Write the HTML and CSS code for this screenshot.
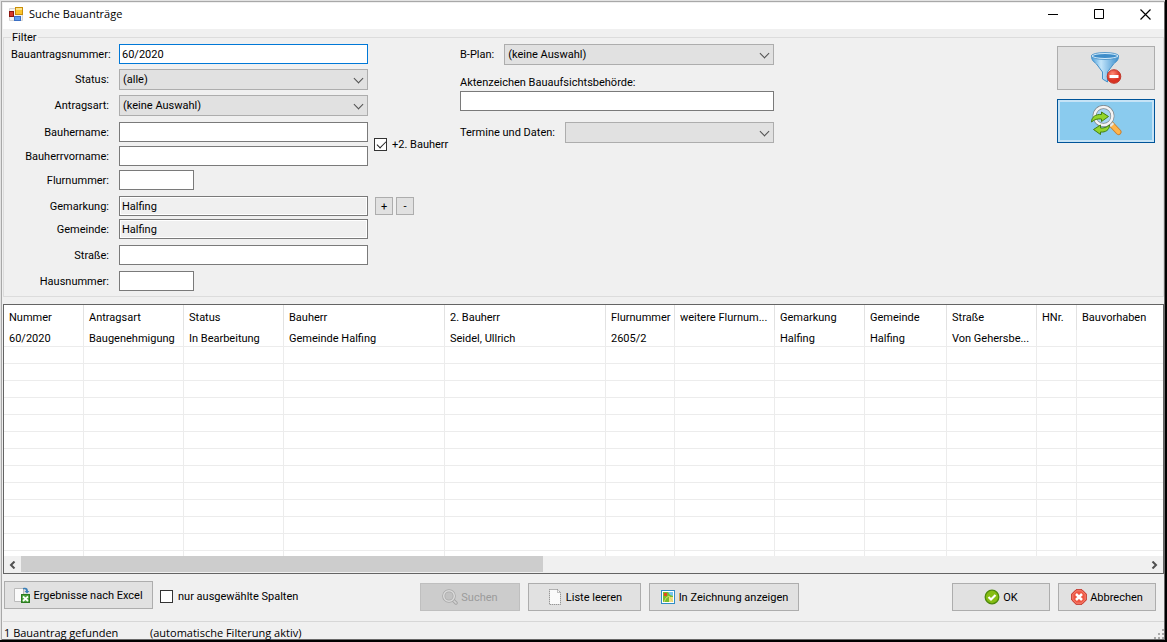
FILE: index.html
```html
<!DOCTYPE html>
<html lang="de">
<head>
<meta charset="utf-8">
<title>Suche Bauanträge</title>
<link rel="stylesheet" href="styles.css">
</head>
<body>
<div class="window">
  <header class="titlebar">
    <svg class="app-icon" width="14" height="14" viewBox="0 0 14 14" aria-hidden="true">
      <path d="M.5 1.500h13v12H.5z" fill="#f4f4f4" stroke="#d5d5d5"/>
      <rect x=".5" y="4.500" width="4" height="5" fill="#d6392b" stroke="#8d1610"/>
      <rect x="6.500" y=".5" width="7" height="7" fill="#fbc42c" stroke="#c98e0a"/>
      <path d="M7 1h6v2H7z" fill="#fde48b"/>
      <rect x="5.500" y="9.500" width="6" height="4" fill="#5f9df0" stroke="#3b6fc4"/>
    </svg>
    <h1 class="title">Suche Bauanträge</h1>
    <div class="window-controls">
      <button type="button" class="window-button" aria-label="Minimieren"><svg width="11" height="11"><path d="M0 5.500h10" stroke="#000"/></svg></button>
      <button type="button" class="window-button" aria-label="Maximieren"><svg width="11" height="11"><path d="M.5.500h9v9h-9z" fill="none" stroke="#000"/></svg></button>
      <button type="button" class="window-button" aria-label="Schließen"><svg width="11" height="11"><path d="M.5.500l10 10M10.500.500l-10 10" stroke="#000" stroke-width="1.200"/></svg></button>
    </div>
  </header>

  <fieldset class="filter">
    <legend>Filter</legend>
    <div class="filter-body">
      <div class="fields">
        <div class="field-group">
          <label for="nr">Bauantragsnummer:</label><input id="nr" class="box focused" type="text" value="60/2020" autofocus>
          <label for="status">Status:</label><div class="drop"><select id="status"><option>(alle)</option></select></div>
          <label for="art">Antragsart:</label><div class="drop"><select id="art"><option>(keine Auswahl)</option></select></div>
        </div>
        <div class="with-extra">
          <div class="field-group tight">
            <label for="name">Bauhername:</label><input id="name" class="box" type="text">
            <label for="vorname">Bauherrvorname:</label><input id="vorname" class="box" type="text">
            <label for="flur">Flurnummer:</label><input id="flur" class="box short" type="text">
          </div>
          <label class="check second-owner"><input type="checkbox" checked>+2. Bauherr</label>
        </div>
        <div class="with-extra">
          <div class="field-group places">
            <label for="gemarkung">Gemarkung:</label><input id="gemarkung" class="box" type="text" value="Halfing" readonly>
            <label for="gemeinde">Gemeinde:</label><input id="gemeinde" class="box" type="text" value="Halfing" readonly>
          </div>
          <div class="steppers"><button type="button" class="button">+</button><button type="button" class="button">-</button></div>
        </div>
        <div class="field-group loose">
          <label for="strasse">Straße:</label><input id="strasse" class="box" type="text">
          <label for="hausnr">Hausnummer:</label><input id="hausnr" class="box short" type="text">
        </div>
      </div>

      <div class="details">
        <div class="detail-row"><label for="bplan">B-Plan:</label><div class="drop"><select id="bplan"><option>(keine Auswahl)</option></select></div></div>
        <div class="detail-stack"><label for="akten">Aktenzeichen Bauaufsichtsbehörde:</label><input id="akten" class="box" type="text"></div>
        <div class="detail-row"><label for="termine">Termine und Daten:</label><div class="drop"><select id="termine"><option></option></select></div></div>
      </div>

      <div class="actions">
        <button type="button" class="button large" aria-label="Filter entfernen">
          <svg width="32" height="32" viewBox="0 0 32 32">
            <defs><linearGradient id="funnel" x1="0" x2="1"><stop offset="0" stop-color="#4d9fdb"/><stop offset=".35" stop-color="#c3e5fa"/><stop offset="1" stop-color="#3c8fce"/></linearGradient>
            <radialGradient id="red" cx=".4" cy=".3"><stop offset="0" stop-color="#ff8b75"/><stop offset="1" stop-color="#d93222"/></radialGradient></defs>
            <path d="M1.500 4c0 5 3 6 5 8l6 8v7l5 3V20l6-8c2-2 5-3 5-8z" fill="url(#funnel)" stroke="#4590c8"/>
            <ellipse cx="15" cy="4" rx="13" ry="2.700" fill="#3f8dc9" stroke="#d3ebfa" stroke-width="1.500"/>
            <ellipse cx="15" cy="4" rx="13.800" ry="3.500" fill="none" stroke="#3c88c2" stroke-width=".8"/>
            <circle cx="24" cy="24.500" r="6.800" fill="url(#red)" stroke="#c23a2d"/>
            <rect x="19.500" y="23" width="9" height="3" fill="#fff"/>
          </svg>
        </button>
        <button type="button" class="button large active" aria-label="Suche aktualisieren">
          <svg width="32" height="32" viewBox="0 0 32 32">
            <path d="M21 19l7.500 8" stroke="#c98032" stroke-width="6" stroke-linecap="round"/>
            <path d="M22 20l6.500 7" stroke="#ffb54c" stroke-width="4.200" stroke-linecap="round"/>
            <path d="M19 17l3.500 3.500" stroke="#e8e8e8" stroke-width="4.500"/>
            <circle cx="13.500" cy="11" r="9" fill="#a7d5f3" stroke="#7d8488" stroke-width="3.800"/>
            <circle cx="13.500" cy="11" r="9" fill="none" stroke="#f4f4f4" stroke-width="2.600"/>
            <path d="M1.500 17c0-5 4-8 10-7.500V7l7 4.500-7 5V14c-4-.5-7 .5-10 3z" fill="#93d52b" stroke="#437f12"/>
            <path d="M19.500 20c0 5-4 7.500-9 7v2.500l-7-5 7-4.500v3c3 .3 6-.5 9-3z" fill="#93d52b" stroke="#437f12"/>
          </svg>
        </button>
      </div>
    </div>
  </fieldset>

  <section class="results">
    <div class="rows">
      <table>
        <colgroup><col class="w80"><col class="w100"><col class="w100"><col class="w161"><col class="w161"><col class="w69"><col class="w100"><col class="w90"><col class="w82"><col class="w90"><col class="w40"><col></colgroup>
        <thead><tr><th>Nummer</th><th>Antragsart</th><th>Status</th><th>Bauherr</th><th>2. Bauherr</th><th>Flurnummer</th><th>weitere Flurnum...</th><th>Gemarkung</th><th>Gemeinde</th><th>Straße</th><th>HNr.</th><th>Bauvorhaben</th></tr></thead>
        <tbody>
          <tr><td>60/2020</td><td>Baugenehmigung</td><td>In Bearbeitung</td><td>Gemeinde Halfing</td><td>Seidel, Ullrich</td><td>2605/2</td><td></td><td>Halfing</td><td>Halfing</td><td>Von Gehersbe...</td><td></td><td></td></tr>
          <tr><td></td><td></td><td></td><td></td><td></td><td></td><td></td><td></td><td></td><td></td><td></td><td></td></tr>
          <tr><td></td><td></td><td></td><td></td><td></td><td></td><td></td><td></td><td></td><td></td><td></td><td></td></tr>
          <tr><td></td><td></td><td></td><td></td><td></td><td></td><td></td><td></td><td></td><td></td><td></td><td></td></tr>
          <tr><td></td><td></td><td></td><td></td><td></td><td></td><td></td><td></td><td></td><td></td><td></td><td></td></tr>
          <tr><td></td><td></td><td></td><td></td><td></td><td></td><td></td><td></td><td></td><td></td><td></td><td></td></tr>
          <tr><td></td><td></td><td></td><td></td><td></td><td></td><td></td><td></td><td></td><td></td><td></td><td></td></tr>
          <tr><td></td><td></td><td></td><td></td><td></td><td></td><td></td><td></td><td></td><td></td><td></td><td></td></tr>
          <tr><td></td><td></td><td></td><td></td><td></td><td></td><td></td><td></td><td></td><td></td><td></td><td></td></tr>
          <tr><td></td><td></td><td></td><td></td><td></td><td></td><td></td><td></td><td></td><td></td><td></td><td></td></tr>
          <tr><td></td><td></td><td></td><td></td><td></td><td></td><td></td><td></td><td></td><td></td><td></td><td></td></tr>
          <tr><td></td><td></td><td></td><td></td><td></td><td></td><td></td><td></td><td></td><td></td><td></td><td></td></tr>
          <tr><td></td><td></td><td></td><td></td><td></td><td></td><td></td><td></td><td></td><td></td><td></td><td></td></tr>
          <tr><td></td><td></td><td></td><td></td><td></td><td></td><td></td><td></td><td></td><td></td><td></td><td></td></tr>
        </tbody>
      </table>
    </div>
    <div class="scrollbar">
      <button type="button" class="scroll-button" aria-label="Nach links"><svg width="7" height="8"><path d="M5.500.500L2 4l3.500 3.500" fill="none" stroke="#505050" stroke-width="2"/></svg></button>
      <div class="scroll-track"><div class="scroll-thumb"></div></div>
      <button type="button" class="scroll-button" aria-label="Nach rechts"><svg width="7" height="8"><path d="M1.500.500L5 4 1.500 7.500" fill="none" stroke="#505050" stroke-width="2"/></svg></button>
    </div>
  </section>

  <div class="toolbar">
    <div class="export">
      <button type="button" class="button">
        <svg width="16" height="16" viewBox="0 0 16 16"><path d="M.5 1.500h9v13h-9z" fill="#fafafa" stroke="#bbb"/><path d="M9 1c3-1 5 0 5 3h1.500L13 6.500 10.500 4H12c0-1.500-1-2-3-1.500z" fill="#3a7fb8"/><rect x="7.500" y="7.500" width="8" height="8" fill="#4ba33b" stroke="#2c7a22"/><path d="M9 9.500l5 4.500M14 9.500L9 14" stroke="#fff" stroke-width="1.700"/></svg>
        Ergebnisse nach Excel
      </button>
      <label class="check"><input type="checkbox">nur ausgewählte Spalten</label>
    </div>
    <div class="button-row">
      <button type="button" class="button search" disabled>
        <svg width="16" height="16" viewBox="0 0 16 16"><path d="M11 11l3 3" stroke="#a5a5a5" stroke-width="3.500" stroke-linecap="round"/><path d="M11 11l3 3" stroke="#d2d2d2" stroke-width="1.700" stroke-linecap="round"/><circle cx="7" cy="7" r="5.300" fill="#c2c2c2" stroke="#a8a8a8" stroke-width="3"/><circle cx="7" cy="7" r="5.300" fill="none" stroke="#dadada" stroke-width="1.500"/></svg>
        Suchen
      </button>
      <button type="button" class="button clear">
        <svg width="16" height="16" viewBox="0 0 16 16"><path d="M2.500.500h8l3 3v12h-11z" fill="#fafafa" stroke="#777" stroke-dasharray="1 1"/><path d="M10.500.500v3h3" fill="none" stroke="#888" stroke-dasharray="1 1"/></svg>
        Liste leeren
      </button>
      <button type="button" class="button draw">
        <svg width="16" height="16" viewBox="0 0 16 16"><rect x="1.500" y="1.500" width="13" height="13" fill="#fff" stroke="#2f8cc4"/><path d="M3 3h10v10H3z" fill="#78bd2c"/><path d="M8 3h5v4l-3-1z" fill="#78c6ec"/><path d="M9 8h4v5H9z" fill="#f0dc86"/><path d="M4 13l2-4 3-2 4 6" fill="none" stroke="#d9d76a"/><path d="M4 4h3v3H4z" fill="#e34a20"/></svg>
        In Zeichnung anzeigen
      </button>
    </div>
    <div class="button-row confirm">
      <button type="button" class="button wide">
        <svg width="16" height="16" viewBox="0 0 16 16"><circle cx="8" cy="8" r="6.800" fill="#86bd13" stroke="#4e8a0c" stroke-width="1.300"/><path d="M4.500 8l2.500 2.500 4.500-4.500" fill="none" stroke="#fff" stroke-width="2.200"/></svg>
        OK
      </button>
      <button type="button" class="button wide">
        <svg width="16" height="16" viewBox="0 0 16 16"><path d="M5 .7h6L15.300 5v6L11 15.300H5L.7 11V5z" fill="#ee5541" stroke="#c32f25"/><path d="M1.800 5.500L5.500 1.800h5l3.700 3.700v5l-3.700 3.700h-5l-3.700-3.700z" fill="none" stroke="#f79484" stroke-width=".8"/><path d="M5 5l6 6M11 5l-6 6" stroke="#fff" stroke-width="2.500"/></svg>
        Abbrechen
      </button>
    </div>
  </div>

  <footer class="statusbar">
    <span class="count">1 Bauantrag gefunden</span><span>(automatische Filterung aktiv)</span>
    <svg class="grip" width="10" height="10"><path d="M8 0h2v2H8zM4 4h2v2H4zM8 4h2v2H8zM0 8h2v2H0zM4 8h2v2H4zM8 8h2v2H8z" fill="#aaa"/></svg>
  </footer>
</div>
</body>
</html>
```

FILE: styles.css
```css
* { box-sizing: border-box; }

body {
  margin: 0;
  background: #f0f0f0;
  color: #000;
  font: 11px/13px Roboto, "Liberation Sans", Arial, sans-serif;
}

button, input, select { font: inherit; color: inherit; border-radius: 0; margin: 0; }

.window {
  display: flex;
  flex-direction: column;
  height: 100vh;
  min-width: 1100px;
  min-height: 560px;
  padding: 2px 1px 1px 2px;
  border-right: 2px solid #000;
  border-bottom: 2px solid #000;
  background: #f0f0f0;
  box-shadow: inset 1px 1px #e3e3e3, inset 2px 2px #a8a8a8, inset -1px -1px #696969;
}

.titlebar {
  display: flex;
  align-items: center;
  flex: none;
  height: 26px;
  margin: 1px 0 0 1px;
  padding: 0 0 4px 6px;
  background: #fff;
}
.app-icon { margin-right: 6px; }
.title { margin: 0; font: 11px/16px "Open Sans", "Noto Sans", sans-serif; }
.window-controls { display: flex; margin-left: auto; }
.window-button {
  display: flex;
  align-items: center;
  justify-content: center;
  width: 46px;
  height: 22px;
  padding: 0;
  border: 0;
  background: none;
}
.window-button svg { margin-left: 8px; }

.filter {
  flex: none;
  min-width: 0;
  margin: 2px 0 7px 1px;
  padding: 0 8px 5px 7px;
  border: 1px solid #dcdcdc;
}
.filter legend { padding: 0 1px; }
.filter-body { display: flex; align-items: flex-start; }

.fields { display: flex; flex-direction: column; gap: 6px; width: 449px; }
.field-group {
  display: grid;
  grid-template-columns: 98px 249px;
  column-gap: 10px;
  row-gap: 5px;
  align-items: center;
  flex: none;
}
.field-group.tight { row-gap: 4px; }
.field-group.places { row-gap: 3px; }
.field-group.loose { row-gap: 6px; }
.field-group label { text-align: right; }
.with-extra { display: flex; gap: 6px; align-items: flex-start; }

.box {
  width: 100%;
  height: 20px;
  padding: 0 2px;
  border: 1px solid #7a7a7a;
  background: #fff;
  outline: none;
}
.box.short { width: 75px; }
.box.focused { border-color: #0078d7; }
.box[readonly] { background: #f0f0f0; box-shadow: inset 0 0 0 1px #fff; }

.drop { position: relative; flex: 1; }
.drop select {
  display: block;
  width: 100%;
  height: 21px;
  padding: 0 20px 0 3px;
  border: 1px solid #adadad;
  background: #e1e1e1;
  appearance: none;
}
.drop::after {
  content: "";
  position: absolute;
  top: 6px;
  right: 6px;
  width: 6px;
  height: 6px;
  border: solid #505050;
  border-width: 0 1px 1px 0;
  transform: rotate(45deg);
  pointer-events: none;
}

.check { display: flex; align-items: center; gap: 5px; white-space: nowrap; }
.check input {
  flex: none;
  width: 13px;
  height: 13px;
  border: 1px solid #333;
  background: #fff;
  appearance: none;
}
.check input:checked::before {
  content: "";
  display: block;
  width: 8px;
  height: 4px;
  margin: 2px 0 0 2px;
  border: solid #222;
  border-width: 0 0 1px 1px;
  transform: rotate(-45deg);
}
.second-owner { height: 44px; }

.steppers { display: flex; gap: 3px; padding: 1px 0 0 1px; }
.steppers .button { width: 18px; height: 18px; padding: 0; }

.details { width: 314px; }
.detail-row { display: flex; align-items: center; gap: 10px; }
.detail-stack { display: flex; flex-direction: column; gap: 2px; margin: 11px 0; }

.actions { display: flex; flex-direction: column; gap: 9px; margin: 2px 0 0 auto; }

.button {
  display: flex;
  align-items: center;
  justify-content: center;
  gap: 3px;
  height: 28px;
  padding: 0 8px;
  border: 1px solid #adadad;
  background: #e1e1e1;
  white-space: nowrap;
}
.button svg { flex: none; }
.button.large { width: 98px; height: 44px; }
.button.active { border-color: #005499; background: #8acbee; box-shadow: inset 0 0 0 2px #c5e3f6; }
.button:disabled { border-color: #bfbfbf; background: #ccc; color: #9b9b9b; }

.results {
  display: flex;
  flex-direction: column;
  flex: 1;
  min-height: 0;
  margin-left: 1px;
  border: 1px solid #646464;
  background: #fff;
}
.rows { flex: 1; min-height: 0; overflow: hidden; }
.rows table { width: 100%; table-layout: fixed; border-collapse: separate; border-spacing: 0; }
th, td {
  overflow: hidden;
  padding: 0 0 0 5px;
  border-right: 1px solid #ececec;
  font-weight: normal;
  text-align: left;
  text-overflow: ellipsis;
  white-space: nowrap;
}
th { height: 25px; border-color: #e2e2e2; }
td { height: 17px; border-bottom: 1px solid #ececec; }
th:last-child, td:last-child { border-right: 0; }
.w40 { width: 40px; }
.w69 { width: 69px; }
.w80 { width: 80px; }
.w82 { width: 82px; }
.w90 { width: 90px; }
.w100 { width: 100px; }
.w161 { width: 161px; }

.scrollbar { display: flex; flex: none; height: 17px; background: #f0f0f0; }
.scroll-button { display: flex; align-items: center; justify-content: center; width: 17px; padding: 0; border: 0; background: none; }
.scroll-track { flex: 1; padding-bottom: 1px; }
.scroll-thumb { width: 46.4%; height: 100%; background: #cdcdcd; }

.toolbar {
  display: grid;
  grid-template-columns: 408px auto 1fr;
  column-gap: 8px;
  flex: none;
  padding: 7px 8px 10px 2px;
}
.export { display: flex; gap: 7px; align-items: flex-start; }
.export .button { width: 149px; }
.export .check { height: 30px; }
.button-row { display: flex; gap: 8px; padding-top: 2px; }
.confirm { justify-content: flex-end; }
.search { width: 100px; }
.clear { width: 113px; }
.draw { width: 150px; }
.wide { width: 98px; }

.statusbar {
  display: flex;
  flex: none;
  position: relative;
  height: 18px;
  margin-left: 1px;
  padding: 3px 0 0 1px;
  border-top: 1px solid #d7d7d7;
  font: 11px/16px "Open Sans", "Noto Sans", sans-serif;
}
.count { width: 146px; }
.grip { position: absolute; right: 0; bottom: 0; }
```
